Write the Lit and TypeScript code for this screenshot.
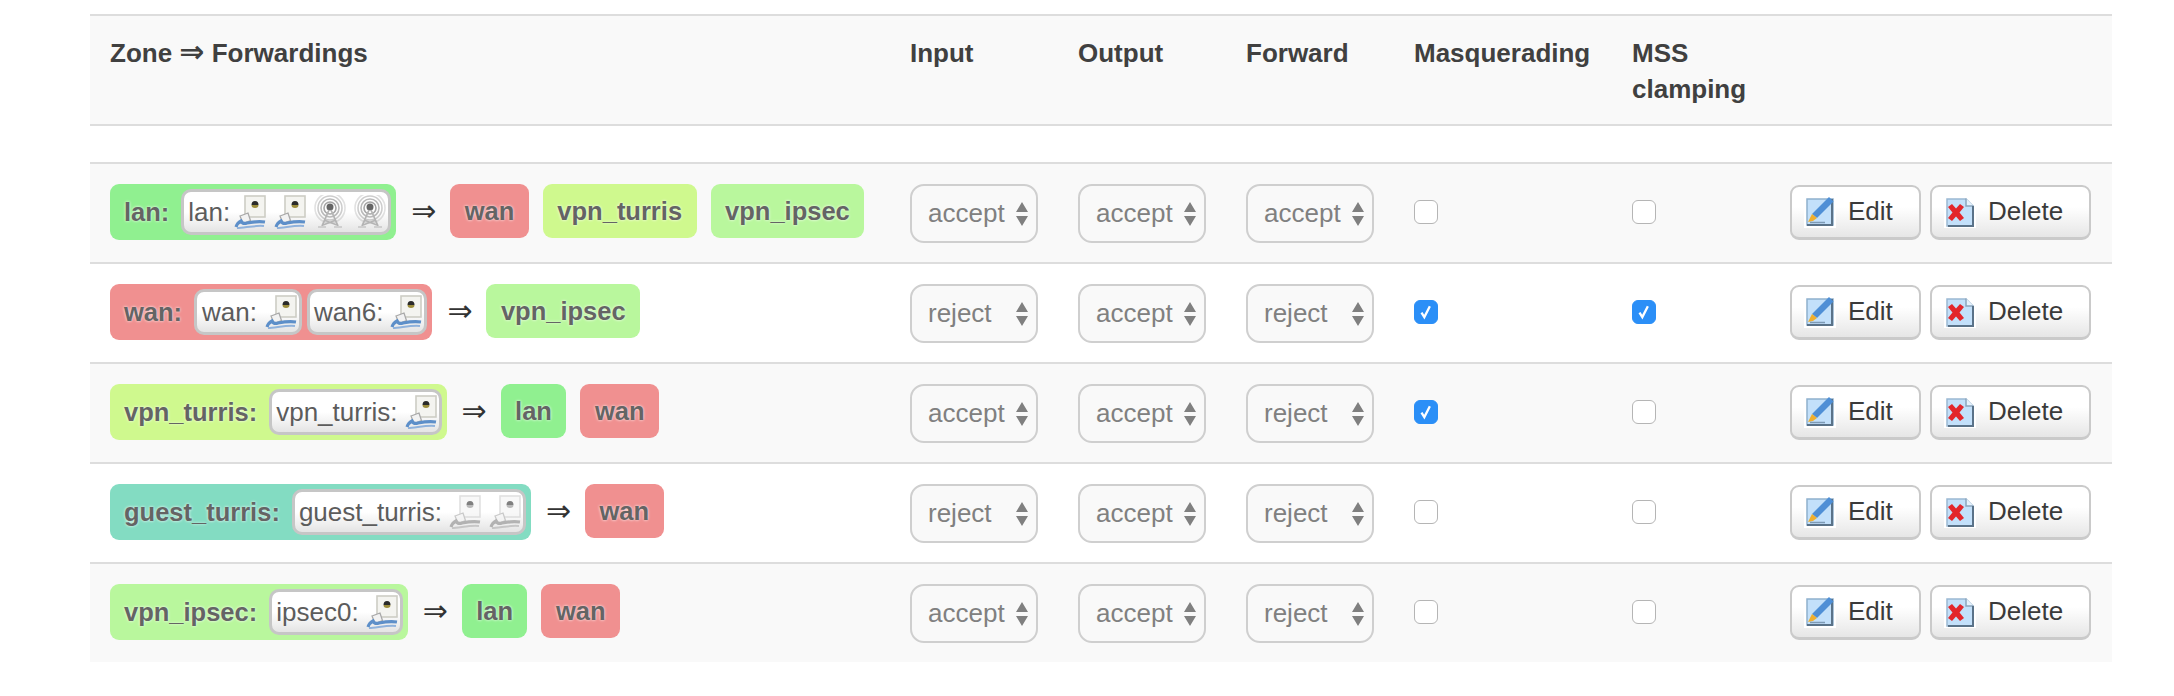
import { LitElement, html, css, svg } from "lit";
import { customElement } from "lit/decorators.js";

const COL = { lan: "#90f090", wan: "#f09090", turris: "#cff98e", ipsec: "#b9f79d", guest: "#83dcc2" };

const eth = (off = false) => html`<svg class="ic ${off ? "off" : ""}" viewBox="0 0 32 34" width="32" height="34">
  <rect x="11" y="1" width="20" height="21" fill="#f4f4f0" stroke="#cdcdc5" stroke-width="1.6"/>
  <path d="M17.500 10a3.500 4 0 0 1 7 0z" fill="#2a2a2a"/>
  <path d="M17.500 10h7a3.500 3 0 0 1-7 0z" fill="#9c8d3c"/>
  <path d="M6 21l8-3 2.500 7.500-7.500 3z" fill="#f2f2f2" stroke="#a8a8a8" stroke-width="1.3"/>
  <path d="M2 32c1-3 3-5 5-6 1 2 3 3 6 2 5-1 12-2 18-1" fill="none" stroke="#5d8fc9" stroke-width="3.200"/>
  <path d="M3 33c7 0 18-3 27-2" fill="none" stroke="#8fb2dc" stroke-width="2"/>
</svg>`;

const wifi = () => html`<svg class="ic wf" viewBox="0 0 32 34" width="32" height="34">
  ${[15, 12, 9, 6].map((r, i) => svg`<circle cx="16" cy="13" r=${r} fill="none" stroke="#9c9c9c" stroke-width="1.600" opacity=${0.3 + i * 0.2}/>`)}
  <circle cx="16" cy="12" r="3.500" fill="#666"/>
  <path d="M15 15L8 31M17 15l7 16M10 25l13 5M22 25L9 30" fill="none" stroke="#b4b4b4" stroke-width="1.800"/>
  <path d="M4 32h8M20 32h8" stroke="#cfcfcf" stroke-width="2"/>
</svg>`;

const editIc = html`<svg class="ic2" viewBox="0 0 32 32" width="32" height="32">
  <rect width="32" height="32" fill="#fff"/>
  <rect x="3" y="3" width="26" height="26" fill="#c3e0fa" stroke="#8fb0cd" stroke-width="1.500"/>
  <path d="M29 3v27H3v-2h24V3z" fill="#5a7288"/>
  <path d="M25 1l4.500 4.500L13 22l-5-4z" fill="#4f8fd6"/>
  <path d="M8 18l5 4-4 3-5 1z" fill="#f0b030"/>
  <path d="M6 26.500h15" stroke="#7d9ab5" stroke-width="1.500"/>
</svg>`;

const delIc = html`<svg class="ic2" viewBox="0 0 32 32" width="32" height="32">
  <rect width="32" height="32" fill="#fff"/>
  <path d="M3 3h19l7 7v20H3z" fill="#c3e0fa" stroke="#9ab8d2" stroke-width="1.500"/>
  <path d="M22 2.500v7.500h7.500" fill="#e6f2fd" stroke="#8aa5bd" stroke-width="1.500"/>
  <path d="M29 10v20H4" fill="none" stroke="#5a7288" stroke-width="2"/>
  <path d="M4 11l4-3 4 4.500L16 8l4 3-4.500 5.500L20 22l-4 3-4-4.500L8 25l-4-3 4.500-5.500z" fill="#e3262b"/>
</svg>`;

type Row = {
  name: string; color: string;
  nets: { label: string; icons: unknown[]; cls?: string }[];
  fw: [string, string][];
  sel: [string, string, string]; masq: boolean; mss: boolean;
};

const rows: Row[] = [
  { name: "lan", color: COL.lan, nets: [{ label: "lan:", cls: "tight", icons: [eth(), eth(), wifi(), wifi()] }],
    fw: [["wan", COL.wan], ["vpn_turris", COL.turris], ["vpn_ipsec", COL.ipsec]],
    sel: ["accept", "accept", "accept"], masq: false, mss: false },
  { name: "wan", color: COL.wan, nets: [{ label: "wan:", cls: "wide", icons: [eth()] }, { label: "wan6:", icons: [eth()] }],
    fw: [["vpn_ipsec", COL.ipsec]],
    sel: ["reject", "accept", "reject"], masq: true, mss: true },
  { name: "vpn_turris", color: COL.turris, nets: [{ label: "vpn_turris:", icons: [eth()] }],
    fw: [["lan", COL.lan], ["wan", COL.wan]],
    sel: ["accept", "accept", "reject"], masq: true, mss: false },
  { name: "guest_turris", color: COL.guest, nets: [{ label: "guest_turris:", icons: [eth(true), eth(true)] }],
    fw: [["wan", COL.wan]],
    sel: ["reject", "accept", "reject"], masq: false, mss: false },
  { name: "vpn_ipsec", color: COL.ipsec, nets: [{ label: "ipsec0:", icons: [eth()] }],
    fw: [["lan", COL.lan], ["wan", COL.wan]],
    sel: ["accept", "accept", "reject"], masq: false, mss: false },
];

@customElement("app-root")
export class AppRoot extends LitElement {
  static styles = css`
    :host { display: block; background: #fff; height: 696px; overflow: hidden;
      font-family: "Liberation Sans", Arial, sans-serif; font-size: 26px; color: #404040; }
    .table { margin: 0 62px 0 90px; padding-top: 14px; }
    .grid { display: grid; grid-template-columns: 800px 168px 168px 168px 218px 158px 1fr; }
    .head { background: #f9f9f9; border-top: 2px solid #ddd; border-bottom: 2px solid #ddd;
      height: 108px; font-weight: 700; line-height: 36px; }
    .head > div { padding: 19px 20px 0; }
    .harrow { font-family: "DejaVu Sans", sans-serif; font-size: 30px; font-weight: 700; line-height: 0; }
    .spacer { height: 36px; }
    .row { height: 98px; border-top: 2px solid #ddd; align-items: center; }
    .row:nth-of-type(odd) { background: #f9f9f9; }
    .row > div { padding-left: 20px; }
    .zonecell { display: flex; align-items: flex-start; align-self: start; padding-top: 20px; line-height: 30px; }
    .zone, .pill { border-radius: 9px; font-weight: 700; font-size: 25.5px; color: #646464; text-shadow: 0 0 3px #fff; }
    .zone { display: flex; align-items: center; height: 56px; padding: 0 5px 0 14px; gap: 12px; box-sizing: border-box; }
    .nets { display: flex; gap: 5px; }
    .net { display: flex; align-items: center; gap: 7px; height: 46px; box-sizing: border-box; padding: 0 2px 0 4px;
      border: 3px solid #c6c6c6; border-radius: 10px; background: linear-gradient(#fff 50%, #e4e4e4);
      font-size: 26px; font-weight: 400; color: #5c5c5c; text-shadow: none; }
    .net.tight { gap: 4px; }
    .net.wide { gap: 8px; padding-left: 5px; }
    .ics { display: flex; gap: 8px; }
    .arrow { margin: 0 14px 0 15px; width: 25px; height: 54px; line-height: 54px; text-align: center;
      font-family: "DejaVu Sans", sans-serif; font-size: 30px; color: #333; }
    .pills { display: flex; gap: 14px; }
    .pill { height: 54px; padding: 0 14.5px; display: flex; align-items: center; }
    .ic, .ic2 { display: block; flex: none; }
    .ic { filter: blur(.55px); }
    .ic2 { filter: blur(.35px); }
    .ic.off { filter: grayscale(1) opacity(.6) blur(.55px); }
    .ic.wf { filter: blur(.6px); }
    .sel { width: 128px; height: 59px; box-sizing: border-box; border: 2px solid #cfcfcf; border-radius: 14px;
      background: #f9f9f9; color: #808080; display: flex; align-items: center; justify-content: space-between;
      padding: 0 8px 0 16px; margin-top: 1px; }
    .sel svg { display: block; }
    .cb { width: 24px; height: 24px; box-sizing: border-box; border: 1.5px solid #b5b5b5; border-radius: 6px;
      background: #fff; margin-top: -2px; }
    .cb.on { background: #2b8ff7; border-color: #2b8ff7; display: flex; align-items: center; justify-content: center; }
    .acts { display: flex; gap: 9px; margin-top: -2px; }
    .btn { height: 55px; box-sizing: border-box; border: 2px solid #cacaca; border-bottom-width: 3px; border-radius: 9px;
      background: linear-gradient(#fff 40%, #e6e6e6); display: flex; align-items: center; gap: 12px;
      padding: 0 0 0 12px; color: #3a3a3a; }
    .btn.e { width: 131px; }
    .btn.d { width: 161px; }
  `;

  private arrows = html`<svg viewBox="0 0 12 24" width="12" height="24"><path d="M6 0l6 10H0zM0 14h12L6 24z" fill="#808080"/></svg>`;

  private cb(on: boolean) {
    return html`<div class="cb ${on ? "on" : ""}">${on
      ? html`<svg viewBox="0 0 14 14" width="18" height="18"><path d="M3.500 7.500l2.200 3.500L10 2.500" fill="none" stroke="#fff" stroke-width="1.800"/></svg>`
      : ""}</div>`;
  }

  render() {
    return html`<div class="table">
      <div class="grid head">
        <div>Zone <span class="harrow">⇒</span> Forwardings</div><div>Input</div><div>Output</div><div>Forward</div>
        <div>Masquerading</div><div>MSS clamping</div><div></div>
      </div>
      <div class="spacer"></div>
      ${rows.map((r) => html`<div class="grid row">
        <div class="zonecell">
          <div class="zone" style="background:${r.color}">
            <span>${r.name}:</span>
            <div class="nets">${r.nets.map((n) => html`<div class="net ${n.cls ?? ""}"><span>${n.label}</span><div class="ics">${n.icons}</div></div>`)}</div>
          </div>
          <div class="arrow">⇒</div>
          <div class="pills">${r.fw.map(([t, c]) => html`<div class="pill" style="background:${c}">${t}</div>`)}</div>
        </div>
        ${r.sel.map((s) => html`<div><div class="sel"><span>${s}</span>${this.arrows}</div></div>`)}
        <div>${this.cb(r.masq)}</div>
        <div>${this.cb(r.mss)}</div>
        <div><div class="acts">
          <div class="btn e">${editIc}<span>Edit</span></div>
          <div class="btn d">${delIc}<span>Delete</span></div>
        </div></div>
      </div>`)}
    </div>`;
  }
}
